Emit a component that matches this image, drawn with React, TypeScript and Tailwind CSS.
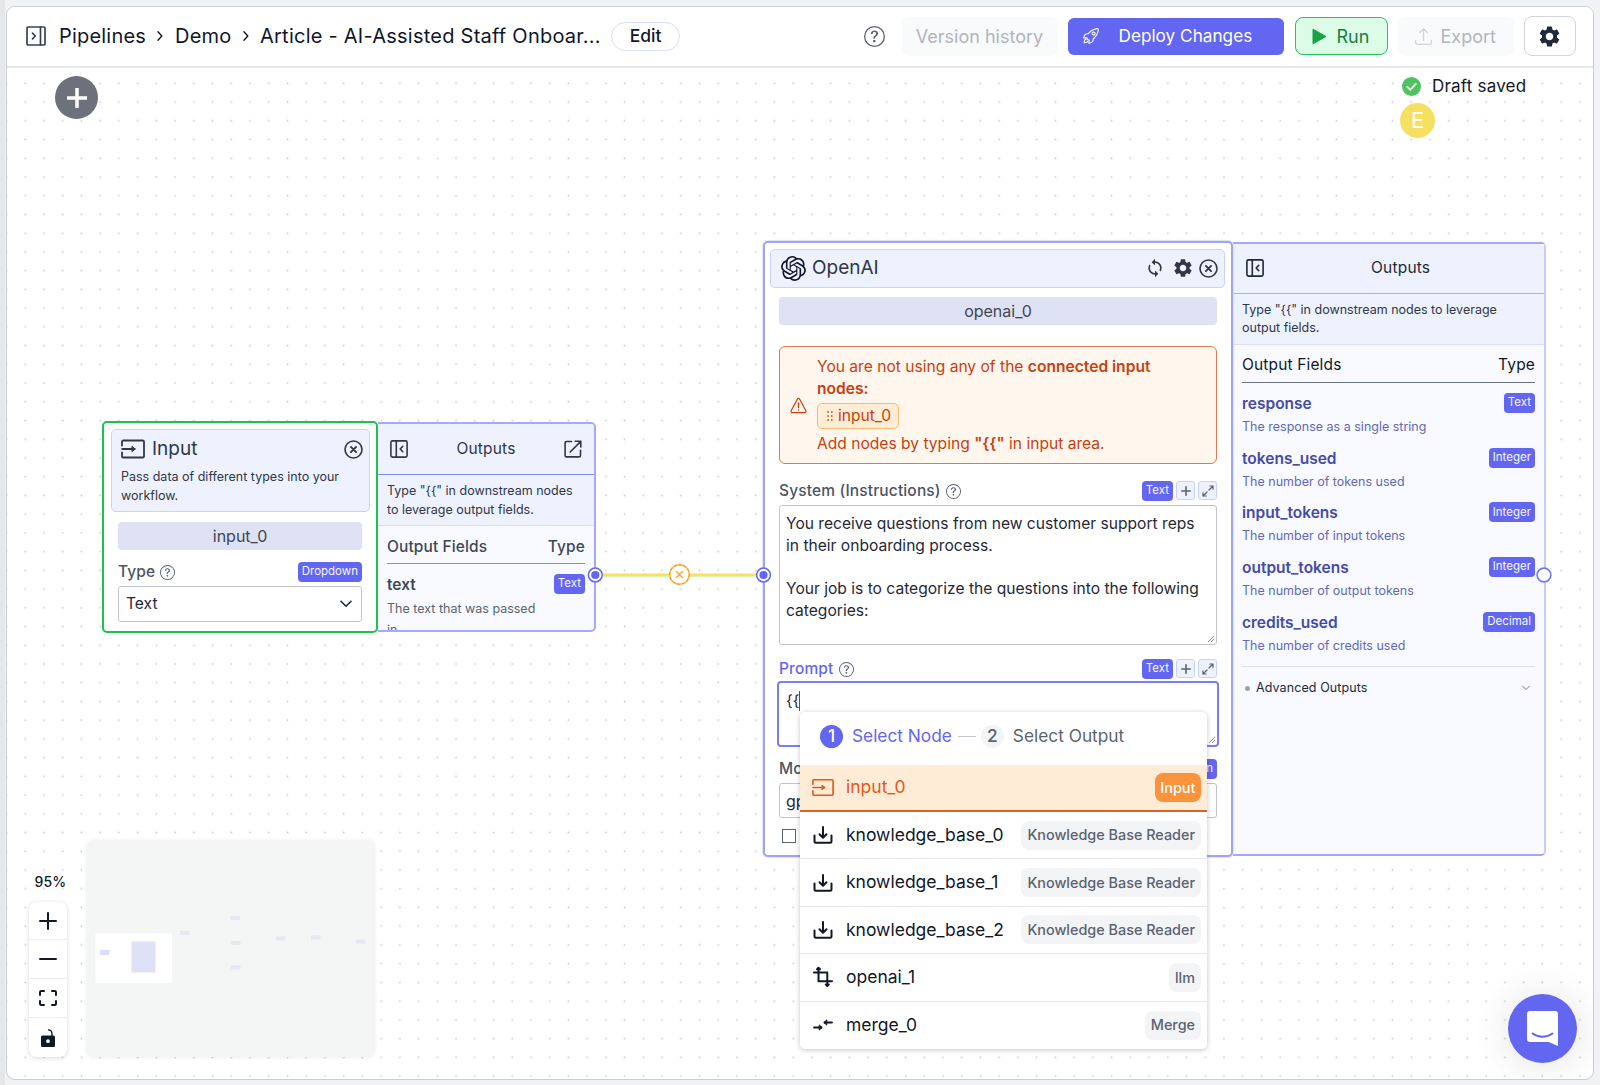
import type { ReactNode } from "react";
import { BsQuestionCircle } from "react-icons/bs";
import { HiOutlineArrowUpTray } from "react-icons/hi2";
import { IoRocketOutline, IoWarningOutline } from "react-icons/io5";
import { MdSettings, MdSync } from "react-icons/md";
import { SiOpenai } from "react-icons/si";

interface IconProps {
  className?: string;
}

interface StrokeIconProps extends IconProps {
  children: ReactNode;
  viewBox?: string;
  strokeWidth?: number;
}

const StrokeIcon = ({
  children,
  className,
  viewBox = "0 0 24 24",
  strokeWidth = 2,
}: StrokeIconProps) => (
  <svg
    className={className}
    viewBox={viewBox}
    fill="none"
    stroke="currentColor"
    strokeWidth={strokeWidth}
    strokeLinecap="round"
    strokeLinejoin="round"
  >
    {children}
  </svg>
);

const SidebarIcon = ({ className }: IconProps) => (
  <StrokeIcon className={className} viewBox="0 0 20 20" strokeWidth={1.7}>
    <rect x="1" y="1" width="18" height="18" rx="1" />
    <path d="M14.5 1v18M6.5 7.2 9.3 10l-2.8 2.8" />
  </StrokeIcon>
);

const CollapseIcon = ({ className }: IconProps) => (
  <StrokeIcon className={className} viewBox="0 0 18 18" strokeWidth={1.6}>
    <rect x="0.9" y="0.9" width="16.2" height="16.2" rx="1.6" />
    <path d="M6.3 1v16M12.7 6.4 10.2 9l2.5 2.6" />
  </StrokeIcon>
);

const ExternalIcon = ({ className }: IconProps) => (
  <StrokeIcon className={className} viewBox="0 0 18 18" strokeWidth={1.6}>
    <path d="M7.5 1.5H2.6A1.5 1.5 0 0 0 1.1 3v12.4a1.5 1.5 0 0 0 1.5 1.5H15a1.5 1.5 0 0 0 1.5-1.5v-5M11.2 1.3h5.6v5.6M16.5 1.6 6.2 12" />
  </StrokeIcon>
);

const InputIcon = ({ className }: IconProps) => (
  <StrokeIcon className={className} viewBox="0 0 24 20" strokeWidth={1.8}>
    <path d="M1 6.5V2.8A1.3 1.3 0 0 1 2.3 1.5h19.4A1.3 1.3 0 0 1 23 2.8v14.4a1.3 1.3 0 0 1-1.3 1.3H2.3A1.3 1.3 0 0 1 1 17.2v-3.7M1.2 10h12.5" />
    <path d="m11.2 7.6 3 2.4-3 2.4z" fill="currentColor" strokeWidth={1} />
  </StrokeIcon>
);

const CloseCircleIcon = ({ className }: IconProps) => (
  <StrokeIcon className={className} viewBox="0 0 19 19" strokeWidth={1.6}>
    <circle cx="9.5" cy="9.5" r="8.5" />
    <path d="m6.9 6.9 5.2 5.2M12.1 6.9l-5.2 5.2" strokeWidth={1.9} />
  </StrokeIcon>
);

const DownloadIcon = ({ className }: IconProps) => (
  <StrokeIcon className={className} viewBox="0 0 20 20">
    <path d="M1.5 10.5v5.8a1.5 1.5 0 0 0 1.5 1.5h14a1.5 1.5 0 0 0 1.5-1.5v-5.8M10 2v10.5M6.5 9.3l3.5 3.5 3.5-3.5" />
  </StrokeIcon>
);

const CropIcon = ({ className }: IconProps) => (
  <StrokeIcon className={className} viewBox="0 0 20 22">
    <path d="M5.5 2v13.3h13.5M1 6.5h13.3v13M4 3.300l1.5-1.5 1.5 1.5M12.8 18.5l1.5 1.5 1.5-1.5" />
  </StrokeIcon>
);

const MergeIcon = ({ className }: IconProps) => (
  <StrokeIcon className={className} viewBox="0 0 20 14" strokeWidth={1.8}>
    <path d="M19 4.5h-7.5M1 9.5h7.5" />
    <path d="m13.5 2.2-2.6 2.3 2.6 2.3zM6.5 7.2l2.6 2.3-2.6 2.3z" fill="currentColor" strokeWidth={1} />
  </StrokeIcon>
);

const ExpandIcon = ({ className }: IconProps) => (
  <StrokeIcon className={className} viewBox="0 0 12 12" strokeWidth={1.2}>
    <path d="M7 5l4-4M7.8 1H11v3.2M5 7l-4 4M4.2 11H1V7.8" />
  </StrokeIcon>
);

const PlusIcon = ({ className }: IconProps) => (
  <StrokeIcon className={className} viewBox="0 0 10 10" strokeWidth={1.6}>
    <path d="M5 .8v8.4M.8 5h8.4" />
  </StrokeIcon>
);

const ChevronDown = ({ className }: IconProps) => (
  <StrokeIcon className={className} viewBox="0 0 12 8" strokeWidth={1.6}>
    <path d="M1 1.3l5 5 5-5" />
  </StrokeIcon>
);

const ChevronRight = ({ className }: IconProps) => (
  <StrokeIcon className={className} viewBox="0 0 8 12" strokeWidth={1.4}>
    <path d="M2 1.8 5.8 6 2 10.2" />
  </StrokeIcon>
);

const ResizeGrip = () => (
  <svg
    className="absolute right-0.5 bottom-0.5 size-1.5"
    viewBox="0 0 6 6"
    stroke="#6b7280"
    strokeWidth="0.8"
  >
    <path d="M0 6 6 0M3 6l3-3" />
  </svg>
);

const Header = () => (
  <header className="flex h-[61px] shrink-0 items-center border-b-2 border-[#e5e7eb] bg-white pb-px text-[20px] text-[#0f172a]">
    <SidebarIcon className="ml-[19px] size-5 text-[#374151]" />
    <span className="ml-[13px] w-[88px] tracking-[0.2px]">Pipelines</span>
    <ChevronRight className="ml-[9px] h-3 w-2" />
    <span className="ml-[11px] w-[58px] tracking-[0.2px]">Demo</span>
    <ChevronRight className="ml-[9px] h-3 w-2" />
    <span className="ml-[10px] w-[344px] tracking-[0.24px] whitespace-nowrap">
      Article - AI-Assisted Staff Onboar...
    </span>
    <button className="ml-[7px] h-[29px] w-[69px] rounded-full border border-[#d9dcfb] text-[17.5px] leading-none font-medium">
      Edit
    </button>
    <BsQuestionCircle className="ml-auto size-[21px] text-[#5b6370]" />
    <button className="ml-[17px] h-[39px] w-[156px] rounded-lg bg-[#f9fafb] text-[18px] text-[#b0b5be]">
      Version history
    </button>
    <button className="ml-[10px] flex h-[37px] w-[216px] items-center rounded-md bg-[#6366f1] text-[17.2px] text-white">
      <IoRocketOutline className="ml-[14px] size-[18px]" />
      <span className="ml-[19px]">Deploy Changes</span>
    </button>
    <button className="ml-[11px] flex h-[38px] w-[93px] items-center rounded-lg border-[1.5px] border-[#22c55e] bg-[#dcfce7] text-[18px] text-[#15803d]">
      <svg className="ml-[16px] h-[17px] w-[15px]" viewBox="0 0 15 17">
        <path d="M1 1.2v14.6L14 8.5z" fill="#16a34a" stroke="#16a34a" strokeLinejoin="round" />
      </svg>
      <span className="ml-[10px]">Run</span>
    </button>
    <button className="ml-[10px] flex h-[39px] w-[116px] items-center rounded-lg bg-[#f9fafb] text-[18px] text-[#b0b5be]">
      <HiOutlineArrowUpTray className="ml-[15px] size-[21px] text-[#d1d5db]" />
      <span className="ml-[7px]">Export</span>
    </button>
    <button className="mr-[17.5px] ml-[10px] flex h-[40px] w-[52px] items-center justify-center rounded-lg border-[1.5px] border-[#d1d5db] bg-white">
      <MdSettings className="size-[25px] text-[#1f2937]" />
    </button>
  </header>
);

interface BadgeProps {
  children: ReactNode;
}

const TypeBadge = ({ children }: BadgeProps) => (
  <span className="flex h-5 items-center rounded bg-[#6366f1] px-1 text-[11.5px] font-normal text-[#f5f6ff]">
    {children}
  </span>
);

const SmallButton = ({ children }: BadgeProps) => (
  <span className="flex size-[19px] items-center justify-center rounded-[3px] border border-[#c7d2fe] bg-[#eef2ff] text-[#5b6370]">
    {children}
  </span>
);

interface FieldLabelProps {
  label: string;
  active?: boolean;
  children: ReactNode;
}

const FieldLabel = ({ label, active, children }: FieldLabelProps) => (
  <div className="flex h-5 items-center">
    <span
      className={
        active
          ? "text-[15.5px] font-medium tracking-[0.15px] text-[#6366f1]"
          : "text-[15.5px] font-medium tracking-[0.15px] text-[#4b5563]"
      }
    >
      {label}
    </span>
    <BsQuestionCircle className="ml-[5px] size-[15px] text-[#5b6370]" />
    <div className="ml-auto flex gap-[3px]">{children}</div>
  </div>
);

const TextActions = () => (
  <>
    <TypeBadge>Text</TypeBadge>
    <SmallButton>
      <PlusIcon className="size-[10px]" />
    </SmallButton>
    <SmallButton>
      <ExpandIcon className="size-[12px]" />
    </SmallButton>
  </>
);

const outputsHint = 'Type "{{" in downstream nodes to leverage output fields.';

const InputNode = () => (
  <div className="absolute top-[353px] left-[95px] flex">
    <div className="z-10 h-[212px] w-[276px] rounded-[5px] border-2 border-[#1cc24f] bg-white">
      <div className="mt-[6px] mr-[6px] ml-[7px] h-[83px] rounded-[5px] border border-[#c7d2fe] bg-[#eef2ff] px-[9px] pt-[9px]">
        <div className="flex h-5 items-center text-[#303746]">
          <InputIcon className="h-[20px] w-[24px]" />
          <span className="ml-[7px] text-[19px]">Input</span>
          <CloseCircleIcon className="mr-[-3px] ml-auto size-[19px]" />
        </div>
        <p className="mt-[9px] text-[12.5px] leading-[18.7px] text-[#303746]">
          Pass data of different types into your workflow.
        </p>
      </div>
      <div className="mx-[14px] mt-[10px] flex h-[28px] items-center justify-center rounded bg-[#dfe1f5] text-[16px] text-[#404754]">
        input_0
      </div>
      <div className="mx-[14px] mt-[12px]">
        <FieldLabel label="Type">
          <TypeBadge>Dropdown</TypeBadge>
        </FieldLabel>
        <div className="mt-[4px] flex h-[36px] items-center justify-between rounded-[3px] border border-[#c0c4cf] px-[7px] text-[15.6px] text-[#1f2937]">
          Text
          <ChevronDown className="mr-[2px] h-[8px] w-[12px]" />
        </div>
      </div>
    </div>
    <div className="mt-px h-[210px] w-[218px] overflow-hidden rounded-r-[5px] border-2 border-l-0 border-[#a5a8fb] bg-[#f8faff]">
      <div className="flex h-[51px] items-center justify-between border-b-[1.5px] border-[#818cf8] bg-[#eef2ff] px-[12px] text-[#303746]">
        <CollapseIcon className="size-[18px]" />
        <span className="text-[15.5px] tracking-[0.2px]">Outputs</span>
        <ExternalIcon className="size-[18px]" />
      </div>
      <p className="h-[51px] border-b border-[#dadefa] bg-[#eef2ff] px-[9px] pt-[7px] text-[12.5px] leading-[18.5px] text-[#303746]">
        {outputsHint}
      </p>
      <div className="mx-[9px]">
        <div className="flex h-[38px] items-center justify-between border-b-[1.5px] border-[#9096a1] pt-[5px] text-[15.5px] font-medium tracking-[0.1px] text-[#404754]">
          <span>Output Fields</span>
          <span>Type</span>
        </div>
        <div className="mt-[10px] flex h-5 items-center justify-between text-[15.5px] font-semibold text-[#404754]">
          <span className="mt-[2px]">text</span>
          <TypeBadge>Text</TypeBadge>
        </div>
        <p className="mt-[4px] w-[160px] text-[12.5px] leading-[21px] text-[#5b6370]">
          The text that was passed in
        </p>
      </div>
    </div>
  </div>
);

const outputFields = [
  { name: "response", type: "Text", description: "The response as a single string" },
  { name: "tokens_used", type: "Integer", description: "The number of tokens used" },
  { name: "input_tokens", type: "Integer", description: "The number of input tokens" },
  { name: "output_tokens", type: "Integer", description: "The number of output tokens" },
  { name: "credits_used", type: "Decimal", description: "The number of credits used" },
];

const OpenAiNode = () => (
  <div className="absolute top-[173px] left-[756px] flex">
    <div className="z-10 h-[616px] w-[470px] rounded-[5px] border-2 border-[#a0a6ea] bg-white shadow-[0_0_1px_1px_#dcdffb]">
      <div className="mt-[6px] mr-[6px] ml-[5px] flex h-[39px] items-center rounded-[5px] border border-[#c7d2fe] bg-[#eef2ff] px-[10px] pb-px text-[#303746]">
        <SiOpenai className="size-[25px] text-[#111827]" />
        <span className="mt-px ml-[6px] text-[19px]">OpenAI</span>
        <MdSync className="ml-auto size-[20px]" />
        <MdSettings className="ml-[7px] size-[22px]" />
        <CloseCircleIcon className="mr-[-4px] ml-[5px] size-[19px]" />
      </div>
      <div className="mx-[14px] mt-[9px] flex h-[28px] items-center justify-center rounded bg-[#dfe1f5] text-[16px] text-[#404754]">
        openai_0
      </div>
      <div className="mx-[14px] mt-[21px] flex h-[118px] items-center rounded-[6px] border border-[#dd7a55] bg-[#fff7ed] text-[15.6px] leading-[22px] text-[#c93f10]">
        <IoWarningOutline className="ml-[9px] size-[19px]" />
        <div className="ml-[9px] w-[370px]">
          <p>
            You are not using any of the{" "}
            <b className="font-semibold">connected input nodes:</b>
          </p>
          <span className="mt-[3px] mb-[4px] flex h-[26px] w-[82px] items-center rounded-[5px] border border-[#fdba74] bg-[#ffedd5] pl-[9px]">
            <svg className="h-[10px] w-[6px]" viewBox="0 0 6 10" fill="currentColor">
              {[1, 5, 9].map((y) => (
                <path key={y} d={`M.3 ${y - 0.8}h1.6v1.6H.3zM4 ${y - 0.8}h1.6v1.6H4z`} />
              ))}
            </svg>
            <span className="ml-[5px]">input_0</span>
          </span>
          <p>
            Add nodes by typing <b className="font-semibold">{'"{{"'}</b> in input area.
          </p>
        </div>
      </div>
      <div className="mx-[14px] mt-[17px]">
        <FieldLabel label="System (Instructions)">
          <TextActions />
        </FieldLabel>
        <div className="relative mt-[4px] h-[140px] rounded-[3px] border border-[#c0c4cf] px-[6px] pt-[7px] text-[15.6px] leading-[21.8px] whitespace-pre text-[#1f2937]">
          {"You receive questions from new customer support reps\nin their onboarding process.\n\nYour job is to categorize the questions into the following\ncategories:"}
          <ResizeGrip />
        </div>
      </div>
      <div className="mx-[14px] mt-[14px]">
        <FieldLabel label="Prompt" active>
          <TextActions />
        </FieldLabel>
        <div className="relative mx-[-2px] mt-[2px] flex h-[66px] rounded-[4px] border-2 border-[#7b7ef3] px-[7px] pt-[8px] text-[15.6px] leading-[20px] text-[#1f2937]">
          {"{{"}
          <span className="h-5 w-px bg-[#4b5563]" />
          <ResizeGrip />
        </div>
      </div>
      <div className="mx-[14px] mt-[12px]">
        <FieldLabel label="Model">
          <TypeBadge>Dropdown</TypeBadge>
        </FieldLabel>
        <div className="mt-[4px] flex h-[35px] items-center rounded-[3px] border border-[#c0c4cf] px-[6px] pt-px text-[16px] text-[#1f2937]">
          gpt-4o
        </div>
        <div className="mt-[11px] ml-[3px] size-[14px] border-[1.5px] border-[#5b6370]" />
      </div>
    </div>
    <div className="mt-px h-[614px] w-[313px] rounded-r-[5px] border-2 border-l-0 border-[#a5a8f6] border-r-[#c9ccfa] bg-[#f8faff]">
      <div className="flex h-[50px] items-center border-b-[1.5px] border-[#a5b0f6] bg-[#eef2ff] px-[12px] pb-px text-[#1f2937]">
        <CollapseIcon className="ml-px size-[18px]" />
        <span className="ml-[107px] text-[15.5px] tracking-[0.2px]">Outputs</span>
      </div>
      <p className="h-[51px] border-b border-[#dadefa] bg-[#eef2ff] px-[9px] pt-[7px] text-[12.5px] leading-[18.4px] text-[#303746]">
        {outputsHint}
      </p>
      <div className="mx-[9px]">
        <div className="flex h-[38px] items-center justify-between border-b border-[#6b7280] pt-[3px] text-[15.5px] tracking-[0.15px] text-[#111827]">
          <span>Output Fields</span>
          <span>Type</span>
        </div>
        {outputFields.map((field) => (
          <div key={field.name} className="mb-[-0.3px] h-[55px] pt-[10px]">
            <div className="flex h-5 items-center justify-between">
              <span className="mt-px text-[15.5px] font-semibold text-[#444aa8]">
                {field.name}
              </span>
              <TypeBadge>{field.type}</TypeBadge>
            </div>
            <p className="mt-[4px] text-[12.5px] leading-5 text-[#6469b5]">
              {field.description}
            </p>
          </div>
        ))}
        <div className="mt-[9px] flex h-[44px] items-center border-t border-[#dfe1e6] text-[12.5px] tracking-[0.1px] text-[#1f2937]">
          <span className="ml-[3px] size-[5px] rounded-full bg-[#9ca3af]" />
          <span className="ml-[6px]">Advanced Outputs</span>
          <ChevronDown className="mr-[5px] ml-auto h-[6px] w-[8px] text-[#9ca3af]" />
        </div>
      </div>
    </div>
  </div>
);

const menuItems = [
  { name: "knowledge_base_0", kind: "Knowledge Base Reader", icon: <DownloadIcon className="size-5" /> },
  { name: "knowledge_base_1", kind: "Knowledge Base Reader", icon: <DownloadIcon className="size-5" /> },
  { name: "knowledge_base_2", kind: "Knowledge Base Reader", icon: <DownloadIcon className="size-5" /> },
  { name: "openai_1", kind: "llm", icon: <CropIcon className="h-[22px] w-5" /> },
  { name: "merge_0", kind: "Merge", icon: <MergeIcon className="h-[14px] w-5" /> },
];

const NodeMenu = () => (
  <div className="absolute top-[644px] left-[793px] z-20 h-[337px] w-[407px] overflow-hidden rounded-[5px] bg-white text-[17.5px] shadow-[0_1px_5px_rgba(15,23,42,0.25)]">
    <div className="flex h-[53px] items-center pb-[5px] pl-[20px] text-[17.3px]">
      <span className="flex size-[23px] items-center justify-center rounded-full bg-[#6366f1] font-medium text-white">
        1
      </span>
      <span className="ml-[9px] text-[#6366f1]">Select Node</span>
      <span className="ml-[6px] h-px w-[18px] bg-[#c4c8cf]" />
      <span className="ml-[5px] flex size-[23px] items-center justify-center rounded-full bg-[#f3f4f6] font-medium text-[#5b6370]">
        2
      </span>
      <span className="ml-[9px] text-[#5b6370]">Select Output</span>
    </div>
    <div className="flex h-[47px] items-center border-b-2 border-[#dd6321] bg-[#ffecd6] pr-[6px] pl-[12px] text-[#e0591a]">
      <InputIcon className="h-[19px] w-[22px]" />
      <span className="ml-[12px]">input_0</span>
      <span className="ml-auto flex h-[29px] items-center rounded-lg bg-[#fb923c] px-[5.5px] text-[14.5px] font-medium text-white">
        Input
      </span>
    </div>
    {menuItems.map((item) => (
      <div
        key={item.name}
        className="flex h-[47.4px] items-center border-b-[1.5px] border-[#e5e7eb] pr-[6px] pl-[13px] text-[#111827] last:border-0"
      >
        {item.icon}
        <span className="ml-[13px]">{item.name}</span>
        <span className="ml-auto flex h-[29px] items-center rounded-lg bg-[#f3f4f6] px-[6px] text-[14.4px] font-medium text-[#5b6370]">
          {item.kind}
        </span>
      </div>
    ))}
  </div>
);

// connection line, node handles and the delete button in the middle
const Edge = () => (
  <svg className="absolute top-[487px] left-[570px] z-10 h-10 w-[1000px]" viewBox="577 555 1000 40" fill="none">
    <path d="M603 574.5h66.5M690 574.5h66" stroke="#fadf5a" strokeWidth="2" />
    <path d="M603 576h66.5M690 576h66" stroke="#b5e86d" strokeWidth="1" />
    <circle cx="679.5" cy="574.5" r="9.8" fill="white" stroke="#fbbf24" strokeWidth="1.5" />
    <circle cx="679.5" cy="574.5" r="9.8" stroke="#fb923c" strokeWidth="1.2" strokeDasharray="3 2" />
    <path d="m676.5 571.5 6 6M682.5 571.5l-6 6" stroke="#fba73c" strokeWidth="1.5" strokeLinecap="round" />
    {[595.3, 763.5].map((cx) => (
      <g key={cx}>
        <circle cx={cx} cy="575" r="6.9" fill="white" stroke="#6366f1" strokeWidth="1.5" />
        <circle cx={cx} cy="575" r="4.1" fill="#6366f1" />
      </g>
    ))}
    <circle cx="1544" cy="575" r="6.9" fill="white" stroke="#7578f2" strokeWidth="1.6" />
  </svg>
);

const DotGrid = () => (
  <svg className="absolute inset-0 h-full w-full">
    <pattern id="dots" x="8.9" y="6" width="18.73" height="18.73" patternUnits="userSpaceOnUse">
      <circle cx="9.36" cy="9.36" r="0.9" fill="#c9ccd2" />
    </pattern>
    <rect width="100%" height="100%" fill="url(#dots)" />
  </svg>
);

const MiniMap = () => (
  <svg
    className="absolute top-[773px] left-[80px] h-[216px] w-[287px] rounded-[6px] bg-[#f4f5f5] shadow-[0_0_4px_rgba(0,0,0,0.1)]"
    viewBox="87 841 287 216"
  >
    <rect x="95.5" y="933.5" width="76.5" height="49.5" fill="white" />
    <rect x="100" y="950" width="9.5" height="5" fill="#dcdef8" />
    <rect x="131.5" y="941.5" width="24" height="31" rx="1" fill="#dfe1f9" />
    {[
      [180, 931],
      [230.5, 916],
      [231, 941],
      [231, 965.5],
      [276, 936.5],
      [311, 935.5],
      [356, 939.5],
    ].map(([x, y]) => (
      <rect key={`${x}-${y}`} x={x} y={y} width="9.5" height="4" rx="1" fill="#e6e7f1" />
    ))}
  </svg>
);

const ZoomControls = () => (
  <div className="absolute top-[803px] left-[21.5px] flex w-[38px] flex-col items-center text-[#111827]">
    <span className="ml-[6px] h-[22px] text-[14px] leading-[22px] font-medium tracking-[0.2px]">95%</span>
    <div className="mt-[9px] w-[38px] divide-y-[1.5px] divide-[#eceef0] rounded-[8px] bg-white shadow-[0_1px_5px_rgba(0,0,0,0.15)]">
      <button className="flex h-[38px] w-full items-center justify-center">
        <StrokeIcon className="size-[18px]" viewBox="0 0 18 18">
          <path d="M9 1v16M1 9h16" />
        </StrokeIcon>
      </button>
      <button className="flex h-[39px] w-full items-center justify-center">
        <StrokeIcon className="size-[18px]" viewBox="0 0 18 18">
          <path d="M1 9h16" />
        </StrokeIcon>
      </button>
      <button className="flex h-[39px] w-full items-center justify-center">
        <StrokeIcon className="h-[16px] w-[18px]" viewBox="0 0 18 16">
          <path d="M1 5V2.2A1.2 1.2 0 0 1 2.2 1H5M13 1h2.8A1.2 1.2 0 0 1 17 2.2V5M17 11v2.8a1.2 1.2 0 0 1-1.2 1.2H13M5 15H2.2A1.2 1.2 0 0 1 1 13.8V11" />
        </StrokeIcon>
      </button>
      <button className="flex h-[39px] w-full items-center justify-center">
        <svg className="h-[18px] w-[14px]" viewBox="0 0 14 18">
          <path
            fillRule="evenodd"
            d="M1.5 6.5h11A1.5 1.5 0 0 1 14 8v8.5a1.5 1.5 0 0 1-1.5 1.5h-11A1.5 1.5 0 0 1 0 16.5V8a1.5 1.5 0 0 1 1.5-1.5zM7 10.3a1.9 1.9 0 1 0 0 3.8 1.9 1.9 0 0 0 0-3.8z"
            fill="#111827"
          />
          <path d="M7 .9c2.5 0 4 1.6 4 4V7" fill="none" stroke="#111827" strokeWidth="1.4" />
        </svg>
      </button>
    </div>
  </div>
);

const App = () => {
  return (
    <div className="flex h-[1085px] w-[1600px] overflow-hidden border-l-[5px] border-[#e5e7eb] bg-[#f1f2f5] pt-[6px] pl-[1px] font-['Inter',sans-serif]">
      <main className="flex h-[1074px] w-[1588px] flex-col overflow-hidden rounded-[9px] border border-[#c8ccd4] bg-white">
        <Header />
        <section className="relative flex-1">
          <DotGrid />
          <button className="absolute top-[8px] left-[48px] flex size-[43px] items-center justify-center rounded-full bg-[#6d717c] text-white">
            <StrokeIcon className="size-[22px]" viewBox="0 0 22 22" strokeWidth={3.5}>
              <path d="M11 1v20M1 11h20" strokeLinecap="butt" />
            </StrokeIcon>
          </button>
          <div className="absolute top-[7px] left-[1393px] flex flex-col">
            <div className="flex h-[24px] items-center text-[17px] tracking-[0.2px] text-[#111827]">
              <svg className="mb-px ml-[2px] size-[19px]" viewBox="0 0 19 19" fill="none">
                <circle cx="9.5" cy="9.5" r="9.5" fill="#4fc35f" />
                <path d="m5.3 9.8 3 3 5.6-6" stroke="white" strokeWidth="1.7" strokeLinecap="round" />
              </svg>
              <span className="ml-[11px]">Draft saved</span>
            </div>
            <span className="mt-[4px] flex size-[35px] items-center justify-center rounded-full bg-[#f5e061] text-[22px] text-white">
              E
            </span>
          </div>
          <InputNode />
          <OpenAiNode />
          <Edge />
          <NodeMenu />
          <MiniMap />
          <ZoomControls />
          <button className="absolute top-[926px] left-[1501px] flex size-[69px] items-center justify-center rounded-full bg-[#6366f1] shadow-[0_2px_40px_rgba(0,0,0,0.12)]">
            <svg className="h-[35px] w-[31px]" viewBox="0 0 31 35" fill="none">
              <path d="M3 0h25a3 3 0 0 1 3 3v32l-9.5-4H3a3 3 0 0 1-3-3V3a3 3 0 0 1 3-3z" fill="white" />
              <path d="M5.5 22.5c6 4.3 14 4.3 20 0" stroke="#6366f1" strokeWidth="2" strokeLinecap="round" />
            </svg>
          </button>
        </section>
      </main>
    </div>
  );
};

export default App;
